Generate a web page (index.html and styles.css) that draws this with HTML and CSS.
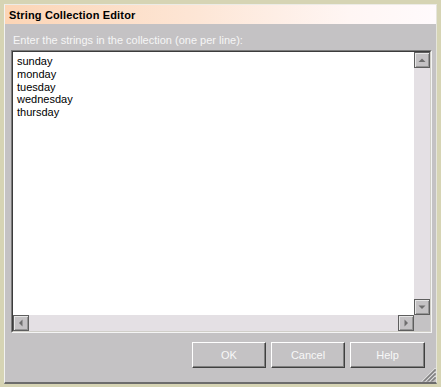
FILE: index.html
```html
<!DOCTYPE html>
<html>
<head>
<meta charset="utf-8">
<link rel="stylesheet" href="styles.css">
</head>
<body>
<div class="dialog">
  <div class="title">String Collection Editor</div>
  <div class="label">Enter the strings in the collection (one per line):</div>
  <div class="editor">
    <div class="editor-inner">
      <div class="text">sunday<br>monday<br>tuesday<br>wednesday<br>thursday</div>
      <div class="vscroll">
        <div class="sbtn"><svg width="14" height="14" viewBox="0 0 14 14"><polygon points="3.5,9 10.5,9 7,5.5" fill="#6e6e6e"/></svg></div>
        <div class="track"></div>
        <div class="sbtn"><svg width="14" height="14" viewBox="0 0 14 14"><polygon points="3.5,5.5 10.5,5.5 7,9" fill="#6e6e6e"/></svg></div>
      </div>
      <div class="hscroll">
        <div class="sbtn"><svg width="14" height="14" viewBox="0 0 14 14"><polygon points="8.5,3.5 8.5,10.5 5,7" fill="#6e6e6e"/></svg></div>
        <div class="track"></div>
        <div class="sbtn"><svg width="14" height="14" viewBox="0 0 14 14"><polygon points="5.5,3.5 5.5,10.5 9,7" fill="#6e6e6e"/></svg></div>
      </div>
      <div class="corner"></div>
    </div>
  </div>
  <div class="buttons">
    <div class="btn">OK</div>
    <div class="btn">Cancel</div>
    <div class="btn wide">Help</div>
  </div>
  <svg class="grip" width="15" height="15" viewBox="0 0 15 15">
    <g stroke-width="1">
      <line x1="14.5" y1="1" x2="1" y2="14.5" stroke="#f4f4f4"/>
      <line x1="14.5" y1="2" x2="2" y2="14.5" stroke="#6a6a6a"/>
      <line x1="14.5" y1="3" x2="3" y2="14.5" stroke="#6a6a6a"/>
      <line x1="14.5" y1="5" x2="5" y2="14.5" stroke="#f4f4f4"/>
      <line x1="14.5" y1="6" x2="6" y2="14.5" stroke="#6a6a6a"/>
      <line x1="14.5" y1="7" x2="7" y2="14.5" stroke="#6a6a6a"/>
      <line x1="14.5" y1="9" x2="9" y2="14.5" stroke="#f4f4f4"/>
      <line x1="14.5" y1="10" x2="10" y2="14.5" stroke="#6a6a6a"/>
      <line x1="14.5" y1="11" x2="11" y2="14.5" stroke="#6a6a6a"/>
    </g>
  </svg>
</div>
</body>
</html>
```

FILE: styles.css
```css
html, body {
  margin: 0;
  padding: 0;
}
body {
  width: 441px;
  height: 387px;
  background: #d6d4b4;
  overflow: hidden;
  font-family: "Liberation Sans", Arial, sans-serif;
  font-size: 11px;
}
.dialog {
  position: relative;
  box-sizing: border-box;
  margin: 4px 4px 0 4px;
  width: 433px;
  height: 380px;
  background: #c4c2c4;
  border-left: 1px solid #f2f2f0;
  border-top: 1px solid #ecebe6;
  border-right: 1px solid #e6e5dc;
  border-bottom: 2px solid #6c6c6c;
  display: flex;
  flex-direction: column;
}
.title {
  height: 19px;
  line-height: 19px;
  padding-left: 4px;
  padding-top: 1px;
  box-sizing: border-box;
  font-weight: bold;
  letter-spacing: 0.15px;
  color: #000;
  background: linear-gradient(to right, #fcd5b6 0%, #fde6d6 45%, #fff6f4 80%, #fffafc 100%);
}
.label {
  margin-top: 10px;
  margin-left: 8px;
  line-height: 13px;
  height: 13px;
  color: #f6f6f6;
}
.editor {
  margin-top: 3px;
  margin-left: 6px;
  width: 421px;
  height: 283px;
  box-sizing: border-box;
  border-top: 1px solid #7c7c7c;
  border-left: 1px solid #7c7c7c;
  border-right: 1px solid #f4f4f4;
  border-bottom: 1px solid #f4f4f4;
}
.editor-inner {
  height: 100%;
  box-sizing: border-box;
  border-top: 1px solid #3c3c3c;
  border-left: 1px solid #3c3c3c;
  border-right: 1px solid #d0cec8;
  border-bottom: 1px solid #d0cec8;
  display: grid;
  grid-template-columns: 1fr 16px;
  grid-template-rows: 1fr 16px;
}
.text {
  background: #fff;
  padding: 3px 4px 2px;
  line-height: 12.8px;
  color: #000;
}
.vscroll {
  display: flex;
  flex-direction: column;
  background: #e4e0e4;
}
.hscroll {
  display: flex;
  background: #e4e0e4;
}
.track {
  flex: 1;
  background: #e4e0e4;
}
.sbtn {
  width: 16px;
  height: 16px;
  box-sizing: border-box;
  border: 1px solid #5e5e5e;
  background: #c4c2c4;
  box-shadow: inset 1px 1px 0 #e6e6e6, inset -1px -1px 0 #949494;
  display: flex;
  align-items: center;
  justify-content: center;
}
.sbtn svg {
  display: block;
}
.corner {
  background: #c4c2c4;
}
.buttons {
  margin-top: 9px;
  display: flex;
  justify-content: flex-end;
  gap: 5px;
  padding-right: 11px;
}
.btn {
  width: 74px;
  height: 26px;
  box-sizing: border-box;
  border-top: 1px solid #ffffff;
  border-left: 1px solid #ffffff;
  border-right: 1px solid #404040;
  border-bottom: 1px solid #404040;
  box-shadow: inset -1px -1px 0 #808080;
  display: flex;
  align-items: center;
  justify-content: center;
  color: #f8f8f8;
  line-height: 13px;
}
.btn.wide {
  width: 75px;
}
.grip {
  position: absolute;
  right: 0;
  bottom: 0;
}
```
